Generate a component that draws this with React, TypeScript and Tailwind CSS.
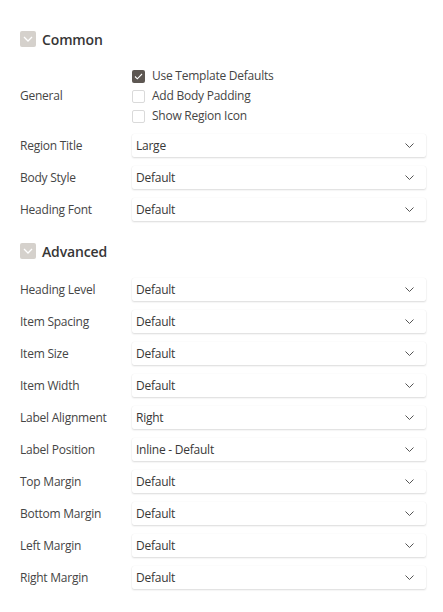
const FONT = { fontFamily: '"Open Sans", "Noto Sans", sans-serif' };

type Field = { label: string; value: string };

const COMMON_SELECTS: Field[] = [
  { label: 'Region Title', value: 'Large' },
  { label: 'Body Style', value: 'Default' },
  { label: 'Heading Font', value: 'Default' },
];

const ADVANCED_SELECTS: Field[] = [
  { label: 'Heading Level', value: 'Default' },
  { label: 'Item Spacing', value: 'Default' },
  { label: 'Item Size', value: 'Default' },
  { label: 'Item Width', value: 'Default' },
  { label: 'Label Alignment', value: 'Right' },
  { label: 'Label Position', value: 'Inline - Default' },
  { label: 'Top Margin', value: 'Default' },
  { label: 'Bottom Margin', value: 'Default' },
  { label: 'Left Margin', value: 'Default' },
  { label: 'Right Margin', value: 'Default' },
];

function SectionHeader({ title }: { title: string }) {
  return (
    <div className="flex h-4 items-center gap-[6px]">
      <span className="flex h-4 w-4 items-center justify-center rounded-[2px] bg-[#d5d1cc]">
        <svg width="10" height="6" viewBox="0 0 10 6" fill="none">
          <path d="M1 1l4 4 4-4" stroke="#fff" strokeWidth="1.3" />
        </svg>
      </span>
      <span className="text-[14px] font-semibold tracking-[-0.01em] text-[#363636]">{title}</span>
    </div>
  );
}

function Checkbox({ label, checked }: { label: string; checked?: boolean }) {
  return (
    <label className="flex h-5 items-center gap-[7px] text-[12px] tracking-[-0.02em] text-[#454545]">
      {checked ? (
        <span className="flex h-[13px] w-[13px] items-center justify-center rounded-[2px] bg-[#5d5752]">
          <svg width="9" height="7" viewBox="0 0 9 7" fill="none">
            <path d="M1 3.5l2.3 2.3L8 1" stroke="#fff" strokeWidth="1.1" />
          </svg>
        </span>
      ) : (
        <span className="h-[13px] w-[13px] rounded-[2px] border border-[#dadada] bg-white" />
      )}
      {label}
    </label>
  );
}

function SelectRow({ label, value }: Field) {
  return (
    <div className="flex h-[23px] items-center">
      <span className="w-[112px] shrink-0 text-[12px] tracking-[-0.02em] text-[#454545]">{label}</span>
      <div className="flex h-full w-[294px] items-center justify-between rounded-[2px] bg-white pl-[4px] pr-[12px] text-[12px] tracking-[-0.02em] text-[#383838] shadow-[0_1px_2px_rgba(0,0,0,0.14),0_0_1px_rgba(0,0,0,0.08)]">
        <span>{value}</span>
        <svg width="9" height="5" viewBox="0 0 9 5" fill="none">
          <path d="M0.5 0.5l4 4 4-4" stroke="#555" strokeWidth="1" />
        </svg>
      </div>
    </div>
  );
}

export default function App() {
  return (
    <div className="min-h-[612px] w-[443px] bg-white pl-[20px] pt-[31px]" style={FONT}>
      <SectionHeader title="Common" />

      <div className="mt-[19px] flex items-center">
        <span className="w-[112px] shrink-0 text-[12px] tracking-[-0.02em] text-[#454545]">General</span>
        <div className="flex flex-col">
          <Checkbox label="Use Template Defaults" checked />
          <Checkbox label="Add Body Padding" />
          <Checkbox label="Show Region Icon" />
        </div>
      </div>

      <div className="mt-[8px] flex flex-col gap-[9px]">
        {COMMON_SELECTS.map((f) => (
          <SelectRow key={f.label} {...f} />
        ))}
      </div>

      <div className="mt-[22px]">
        <SectionHeader title="Advanced" />
      </div>

      <div className="mt-[19px] flex flex-col gap-[9px]">
        {ADVANCED_SELECTS.map((f) => (
          <SelectRow key={f.label} {...f} />
        ))}
      </div>
    </div>
  );
}
